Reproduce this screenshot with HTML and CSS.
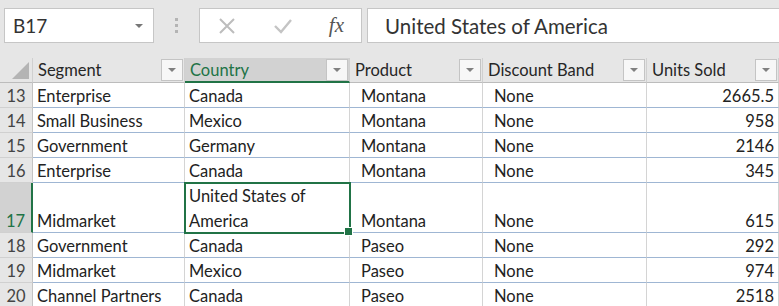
FILE: index.html
```html
<!DOCTYPE html>
<html lang="en">
  <head>
    <meta charset="UTF-8" />
    <meta name="viewport" content="width=device-width, initial-scale=1.0" />
    <title>Sheet</title>
    <link rel="stylesheet" href="styles.css">
  </head>
  <body>
    <div class="formula-bar">
      <div class="name-box">
        <span>B17</span>
        <span class="caret"></span>
      </div>
      <div class="grip"><i></i><i></i><i></i></div>
      <div class="fx-box">
        <svg width="20" height="20" viewBox="0 0 20 20"><path d="M3 3 L17 17 M17 3 L3 17" stroke="#bdbdbd" stroke-width="2" fill="none"/></svg>
        <svg width="22" height="20" viewBox="0 0 22 20"><path d="M3 10 L9 16 L19 4" stroke="#c4c4c4" stroke-width="2.4" fill="none"/></svg>
        <span class="fx">fx</span>
      </div>
      <div class="formula-input">United States of America</div>
    </div>

    <div class="sheet">
      <div class="corner"><span class="tri"></span></div>
      <div class="col-head">Segment<span class="filter"></span></div>
      <div class="col-head active">Country<span class="filter"></span></div>
      <div class="col-head">Product<span class="filter"></span></div>
      <div class="col-head">Discount Band<span class="filter"></span></div>
      <div class="col-head">Units Sold<span class="filter"></span></div>

      <div class="row-head">13</div>
      <div class="cell">Enterprise</div>
      <div class="cell">Canada</div>
      <div class="cell ind">Montana</div>
      <div class="cell ind">None</div>
      <div class="cell num">2665.5</div>

      <div class="row-head">14</div>
      <div class="cell">Small Business</div>
      <div class="cell">Mexico</div>
      <div class="cell ind">Montana</div>
      <div class="cell ind">None</div>
      <div class="cell num">958</div>

      <div class="row-head">15</div>
      <div class="cell">Government</div>
      <div class="cell">Germany</div>
      <div class="cell ind">Montana</div>
      <div class="cell ind">None</div>
      <div class="cell num">2146</div>

      <div class="row-head">16</div>
      <div class="cell">Enterprise</div>
      <div class="cell">Canada</div>
      <div class="cell ind">Montana</div>
      <div class="cell ind">None</div>
      <div class="cell num">345</div>

      <div class="row-head active">17</div>
      <div class="cell">Midmarket</div>
      <div class="cell selected"><span class="wrap">United States of America</span><span class="handle"></span></div>
      <div class="cell ind">Montana</div>
      <div class="cell ind">None</div>
      <div class="cell num">615</div>

      <div class="row-head">18</div>
      <div class="cell">Government</div>
      <div class="cell">Canada</div>
      <div class="cell ind">Paseo</div>
      <div class="cell ind">None</div>
      <div class="cell num">292</div>

      <div class="row-head">19</div>
      <div class="cell">Midmarket</div>
      <div class="cell">Mexico</div>
      <div class="cell ind">Paseo</div>
      <div class="cell ind">None</div>
      <div class="cell num">974</div>

      <div class="row-head">20</div>
      <div class="cell">Channel Partners</div>
      <div class="cell">Canada</div>
      <div class="cell ind">Paseo</div>
      <div class="cell ind">None</div>
      <div class="cell num">2518</div>
    </div>
  </body>
</html>
```

FILE: styles.css
```css
body {
  margin: 0;
  background-color: #e6e6e6;
  font-family: Lato, 'Liberation Sans', sans-serif;
  color: #222;
  overflow: hidden;
}

.formula-bar {
  display: flex;
  align-items: stretch;
  height: 35px;
  padding: 8px 0 15px 4px;
}

.name-box {
  width: 150px;
  background: #fff;
  border: 1px solid #c6c6c6;
  display: flex;
  align-items: center;
  justify-content: space-between;
  padding: 0 8px 0 8px;
  box-sizing: border-box;
  font-size: 19px;
  color: #333;
}

.caret {
  width: 0;
  height: 0;
  border-left: 4px solid transparent;
  border-right: 4px solid transparent;
  border-top: 4px solid #777;
  margin-right: 2px;
}

.grip {
  width: 45px;
  display: flex;
  flex-direction: column;
  align-items: center;
  justify-content: center;
  gap: 3px;
}

.grip i {
  width: 3px;
  height: 3px;
  background: #b4b4b4;
}

.fx-box {
  width: 163px;
  background: #fff;
  border: 1px solid #c6c6c6;
  box-sizing: border-box;
  display: flex;
  align-items: center;
  padding: 0 17px 0 17px;
  justify-content: space-between;
}

.fx {
  font-family: 'Liberation Serif', serif;
  font-style: italic;
  font-size: 21px;
  color: #555;
}

.formula-input {
  flex: 1;
  margin-left: 5px;
  background: #fff;
  border: 1px solid #c6c6c6;
  border-right: none;
  display: flex;
  align-items: center;
  padding-left: 17px;
  font-size: 20.5px;
  color: #333;
}

.sheet {
  display: grid;
  grid-template-columns: 33px 152px 165px 133px 164px 132px;
  grid-template-rows: 25px repeat(4, 25px) 50px repeat(3, 25px);
  font-size: 16.5px;
}

.corner, .col-head {
  border-right: 1px solid #d0d0d0;
  border-bottom: 1px solid #bcbcbc;
  box-sizing: border-box;
  position: relative;
}

.corner {
  background: #e6e6e6;
}

.tri {
  position: absolute;
  right: 3px;
  bottom: 3px;
  width: 0;
  height: 0;
  border-left: 17px solid transparent;
  border-bottom: 17px solid #b4b4b4;
}

.col-head {
  display: flex;
  align-items: center;
  justify-content: space-between;
  padding-left: 5px;
  color: #262626;
}

.col-head.active {
  background: #d2d2d2;
  color: #217346;
  border-bottom: 2px solid #217346;
}

.filter {
  width: 22px;
  height: 22px;
  margin-right: 1px;
  background: #f7f7f7;
  border: 1px solid #c4c4c4;
  box-sizing: border-box;
  display: flex;
  align-items: center;
  justify-content: center;
}

.filter::after {
  content: '';
  border-left: 4px solid transparent;
  border-right: 4px solid transparent;
  border-top: 4px solid #808080;
}

.row-head {
  background: #e6e6e6;
  border-right: 1px solid #c4c4c4;
  border-bottom: 1px solid #d0d0d0;
  box-sizing: border-box;
  display: flex;
  align-items: flex-end;
  justify-content: center;
  color: #444;
  line-height: 21px;
}

.row-head.active {
  background: #d2d2d2;
  color: #217346;
  border-right: 2px solid #217346;
}

.cell {
  background: #fff;
  border-right: 1px solid #d4d4d4;
  border-bottom: 1px solid #9fb6d3;
  box-sizing: border-box;
  padding: 0 4px;
  display: flex;
  align-items: flex-end;
  line-height: 21px;
  white-space: nowrap;
  overflow: hidden;
  position: relative;
}

.cell.ind {
  padding-left: 11px;
}

.cell.num {
  justify-content: flex-end;
  padding-right: 4px;
}

.cell.selected {
  overflow: visible;
  outline: 2px solid #217346;
  outline-offset: -1px;
  z-index: 1;
}

.wrap {
  white-space: normal;
  line-height: 25px;
  position: relative;
  top: 2px;
}

.handle {
  position: absolute;
  right: -4px;
  bottom: -4px;
  width: 7px;
  height: 7px;
  background: #217346;
  border: 1px solid #fff;
}
```
